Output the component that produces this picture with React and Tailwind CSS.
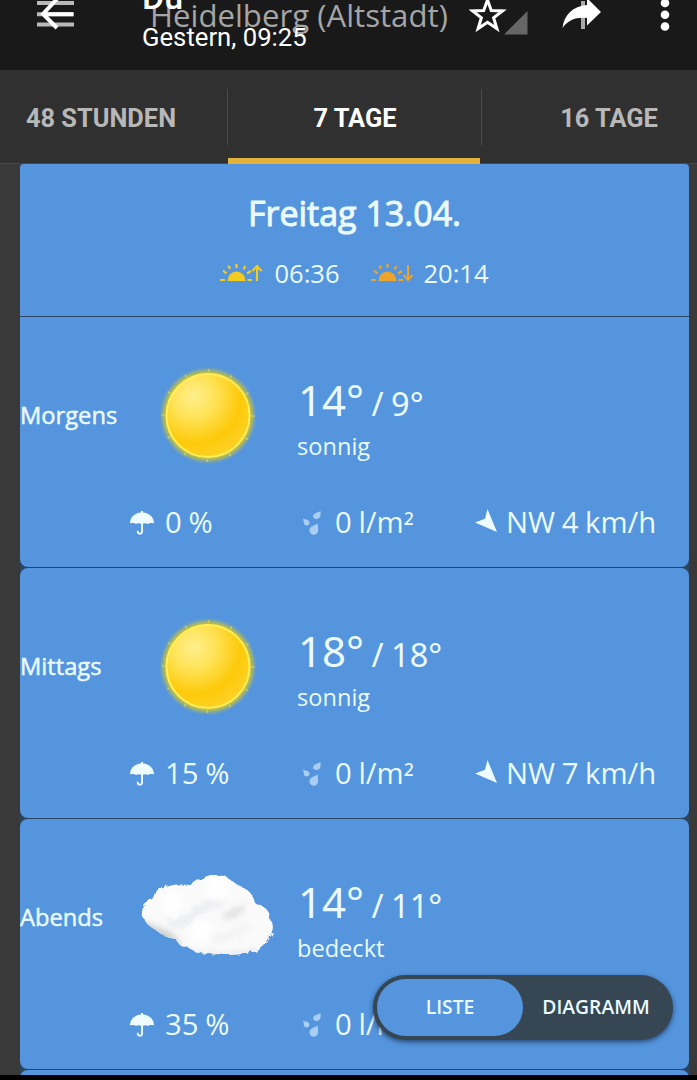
import { useState } from 'react'

const TABS = ['48 STUNDEN', '7 TAGE', '16 TAGE']

const PERIODS = [
  { label: 'Morgens', icon: 'sun', high: 14, low: 9, text: 'sonnig', rain: 0, amount: 0, wind: 'NW 4 km/h' },
  { label: 'Mittags', icon: 'sun', high: 18, low: 18, text: 'sonnig', rain: 15, amount: 0, wind: 'NW 7 km/h' },
  { label: 'Abends', icon: 'cloud', high: 14, low: 11, text: 'bedeckt', rain: 35, amount: 0 },
]

function SunIcon() {
  return (
    <svg width="140" height="110" viewBox="0 0 140 110">
      <defs>
        <radialGradient id="sunFill" cx="0.33" cy="0.27" r="0.75">
          <stop offset="0" stopColor="#fff08c" />
          <stop offset="0.35" stopColor="#ffe256" />
          <stop offset="0.75" stopColor="#fdca0a" />
          <stop offset="1" stopColor="#fdd024" />
        </radialGradient>
        <radialGradient id="sunGlow">
          <stop offset="0.84" stopColor="#dccb1c" />
          <stop offset="0.9" stopColor="#c6c040" stopOpacity="0.75" />
          <stop offset="1" stopColor="#8fb090" stopOpacity="0" />
        </radialGradient>
      </defs>
      <circle cx="70" cy="54.500" r="49" fill="url(#sunGlow)" />
      <circle cx="70" cy="54.500" r="45" fill="none" stroke="#f0e050" strokeWidth="3" strokeDasharray="1.5 22" opacity="0.6" />
      <circle cx="70" cy="54.500" r="41.500" fill="url(#sunFill)" stroke="#fff05a" strokeWidth="2" />
    </svg>
  )
}

function CloudIcon() {
  return (
    <svg width="140" height="110" viewBox="0 0 140 110" className="-mt-[5px]">
      <defs>
        <filter id="cloudEdge" x="-10%" y="-10%" width="120%" height="120%">
          <feTurbulence type="fractalNoise" baseFrequency="0.13" numOctaves="3" seed="4" />
          <feDisplacementMap in="SourceGraphic" scale="6" />
        </filter>
        <filter id="cloudSoft" x="-40%" y="-40%" width="180%" height="180%">
          <feGaussianBlur stdDeviation="3" />
        </filter>
        <clipPath id="cloudClip">
          <path d="M4 50C6 43 11 40 15 37C16 30 23 27 29 26C37 22 46 24 54 24C61 17 72 13 81 14C91 15 96 22 102 25C111 28 116 36 117 42C126 44 133 51 132 58C136 63 136 70 131 75C128 83 121 89 112 91C101 94 89 95 79 93C66 94 55 91 49 86C43 86 39 82 38 78C30 77 22 74 18 69C8 64 4 57 4 50Z" />
        </clipPath>
      </defs>
      <g filter="url(#cloudEdge)">
        <g clipPath="url(#cloudClip)">
          <rect width="140" height="110" fill="#fafafa" />
          <g filter="url(#cloudSoft)">
            <path d="M2 60C18 64 30 68 42 80L40 90L0 76Z" fill="#ced1d2" />
            <path d="M30 62C42 66 50 58 60 50C68 44 76 40 86 42" fill="none" stroke="#e8ebf1" strokeWidth="7" />
            <path d="M86 56C94 54 100 50 106 46" fill="none" stroke="#dcdcdd" strokeWidth="6" />
            <path d="M72 76C84 79 100 74 110 64" fill="none" stroke="#efeff1" strokeWidth="5" />
            <path d="M46 90C66 97 98 96 118 89" fill="none" stroke="#dde1e6" strokeWidth="4" />
            <circle cx="80" cy="28" r="12" fill="#fff" />
            <circle cx="64" cy="70" r="11" fill="#fff" />
            <circle cx="34" cy="42" r="11" fill="#fff" />
          </g>
        </g>
      </g>
    </svg>
  )
}

function SunTimeIcon({ down }) {
  return (
    <svg width="44" height="18" viewBox="0 0 44 18" fill="none" stroke="currentColor" strokeWidth="2.1">
      <path d="M7.500 17a9 9.500 0 0 1 18 0z" fill="currentColor" stroke="none" />
      <path d="M0 16h5M27.500 16h4.500M3 6.500l3.500 3M8.500 1.500l1.500 3.500M16.500 0v4M25.500 2l-2 3.500M31 7l-4 2.500" />
      {down ? <path d="M37 1v14.500M32.500 11l4.500 5l4.500-5" /> : <path d="M37 17V2M32.500 7l4.500-5l4.500 5" />}
    </svg>
  )
}

function UmbrellaIcon() {
  return (
    <svg width="24" height="24" viewBox="0 0 24 24" className="text-[#eefcff]">
      <path d="M0 12.500C0 6 5 2 11 1.500V0h2v1.500C19 2 24 6 24 12.500C22.500 11.800 19.500 11.800 18 13C16.500 12 14 12 13 12.800V20.500a3.100 3.100 0 0 1-6.200 0v-.8h1.900v.8a1.200 1.200 0 0 0 2.400 0V12.800C10 12 7.500 12 6 13C4.500 11.800 1.500 11.800 0 12.500Z" fill="currentColor" />
    </svg>
  )
}

function DropsIcon() {
  return (
    <svg width="18" height="24" viewBox="0 0 18 24" fill="#a9cdf3">
      <path d="M17.500 0C18 4 17.500 8 13.500 8C9.500 8 9 4 12 2.500C14 1.500 16 1 17.500 0Z" />
      <path d="M0 7.500C2 8.500 6.500 8.500 6.500 11.500C6.500 15.500 1 15 .8 12C.7 10 .5 9 0 7.500Z" />
      <path d="M15 12.500C14.500 15 15.500 17 15 20C14 25.500 6 24.500 6.500 19C6.800 15 11 15 15 12.500Z" />
    </svg>
  )
}

function WindIcon() {
  return (
    <svg width="22" height="24" viewBox="0 0 22 24" fill="#eefcff" className="-mt-[5px]">
      <path d="M12.500 0L22 23L0 13.500L10 9.800Z" />
    </svg>
  )
}

function Header() {
  return (
    <header className="relative h-[70px] shrink-0 overflow-hidden bg-[#191919]">
      <div className="flex items-start">
        <svg width="38" height="28" viewBox="0 0 38 28" className="ml-9 shrink-0" stroke="#b9b9b9" strokeWidth="4">
          <path d="M1 3H38M1 14.300H38M1 24.500H38" />
        </svg>
        <h1 className="ml-[76px] -mt-[5px] w-[301px] shrink-0 whitespace-nowrap text-[31.2px] leading-[41px] text-[#a5a5a5]">
          Heidelberg (Altstadt)
        </h1>
        <svg width="64" height="36" viewBox="0 0 64 36" className="ml-[18px] shrink-0">
          <path d="M58.500 11V34.500H35Z" fill="#666" />
          <path d="M18.500 0L22.300 10.600L33.500 10.900L24.600 17.700L27.900 28.600L18.500 22.200L9.100 28.600L12.400 17.700L3.500 10.900L14.700 10.600Z" fill="#191919" stroke="#fff" strokeWidth="3" />
        </svg>
        <svg width="40" height="30" viewBox="0 0 40 30" className="ml-[29px] shrink-0">
          <path d="M19 1h4v28h-4z" fill="#aaa" />
          <path d="M25 -2L39 12L25 25.500V18C14 17 6 20 .5 28C2 15 11 6 25 5Z" fill="#fff" />
        </svg>
        <svg width="10" height="32" viewBox="0 0 10 32" className="ml-[58px] shrink-0" fill="#fff">
          <circle cx="5" cy="3" r="4.300" />
          <circle cx="5" cy="14.700" r="4.300" />
          <circle cx="5" cy="26.500" r="4.300" />
        </svg>
      </div>
      <svg width="34" height="30" viewBox="0 0 34 30" className="absolute left-10 top-0" fill="none" stroke="#fff" strokeWidth="4">
        <path d="M17 -1L3 14L17 28M3 14.300H33" />
      </svg>
      <div className="absolute left-[142px] -top-[20px] font-['Roboto'] text-white">
        <div className="text-[34px] leading-[34px] font-medium">Du</div>
        <div className="mt-[8px] text-[25.7px] leading-[30px]">Gestern, 09:25</div>
      </div>
    </header>
  )
}

function PeriodCard({ period, first }) {
  return (
    <section className={`h-[250px] shrink-0 bg-[#5495dd] ${first ? 'rounded-b-lg' : 'rounded-lg'}`}>
      <div className="flex h-[198px] items-center">
        <div className="w-[118px] text-[23.7px] [-webkit-text-stroke:0.5px]">{period.label}</div>
        <div className="w-[140px]">{period.icon === 'sun' ? <SunIcon /> : <CloudIcon />}</div>
        <div className="ml-[20px] pt-[5px]">
          <div className="whitespace-nowrap font-['Noto_Sans',sans-serif] leading-[50px]">
            <span className="text-[42px]">{period.high}°</span>
            <span className="text-[32.5px] [word-spacing:-1px]"> / {period.low}°</span>
          </div>
          <div className="-ml-px -mt-[6px] text-[23.6px] leading-[34px]">{period.text}</div>
        </div>
      </div>
      <div className="-mt-[5px] flex h-[26px] items-center pl-[110px] text-[29.3px] whitespace-nowrap [word-spacing:-1px]">
        <div className="flex w-[173px] items-center gap-[11px]">
          <UmbrellaIcon />
          <span>{period.rain} %</span>
        </div>
        <div className="flex w-[172px] items-center gap-[14px]">
          <DropsIcon />
          <span>
            {period.amount} l/m<span className="relative top-[4px]">²</span>
          </span>
        </div>
        {period.wind && (
          <div className="flex items-center gap-[9px]">
            <WindIcon />
            <span>{period.wind}</span>
          </div>
        )}
      </div>
    </section>
  )
}

export default function App() {
  const [tab, setTab] = useState(1)
  const [view, setView] = useState('liste')

  return (
    <div className="relative flex h-[1080px] w-[697px] flex-col overflow-hidden bg-[#393939] font-['Open_Sans',sans-serif] text-[#eafaff]">
      <Header />
      <nav className="flex h-[94px] shrink-0 border-b border-[#484848] bg-[#303030] font-['Roboto'] text-[25.4px] font-bold">
        {TABS.map((name, i) => (
          <button
            key={name}
            onClick={() => setTab(i)}
            className={`relative flex shrink-0 items-center justify-center whitespace-nowrap pt-[3px] ${i === 0 ? 'w-[228px] pr-[26px]' : 'w-[254px]'} ${tab === i ? 'text-white' : 'text-[#b8b8b8]'}`}
          >
            {name}
            {i < 2 && <span className="absolute right-0 top-[19px] h-[56px] w-px bg-[#4a4a4a]" />}
            {tab === i && <span className="absolute left-0 bottom-[-1px] h-[6px] w-[252px] bg-[#e3b23c]" />}
          </button>
        ))}
      </nav>

      <main className="mr-2 ml-5 flex h-[911px] shrink-0 flex-col gap-px overflow-hidden rounded-t-sm bg-[#2b4560]">
        <section className="flex h-[152px] shrink-0 flex-col items-center bg-[#5495dd]">
          <h2 className="mt-[25px] text-[34px] leading-[48px] [-webkit-text-stroke:1px]">Freitag 13.04.</h2>
          <div className="mt-[18px] flex items-center text-[25.5px] leading-[36px]">
            <span className="text-[#f3cc22]"><SunTimeIcon /></span>
            <span className="ml-[10px]">06:36</span>
            <span className="ml-[31px] text-[#eba52c]"><SunTimeIcon down /></span>
            <span className="ml-[9px]">20:14</span>
          </div>
        </section>
        {PERIODS.map((period, i) => (
          <PeriodCard key={period.label} period={period} first={i === 0} />
        ))}
        <section className="h-[20px] shrink-0 rounded-t-lg bg-[#5495dd]" />
      </main>
      <div className="h-[5px] shrink-0 bg-black" />

      <div className="absolute left-[373px] top-[975px] flex h-[65px] w-[300px] rounded-full bg-[#364653] p-1 text-[19.3px] font-semibold shadow-[0_2px_5px_rgba(20,40,70,0.7)]">
        <button onClick={() => setView('liste')} className={`w-[146px] rounded-full ${view === 'liste' ? 'bg-[#5495dd]' : ''}`}>
          LISTE
        </button>
        <button onClick={() => setView('diagramm')} className={`w-[146px] rounded-full ${view === 'diagramm' ? 'bg-[#5495dd]' : ''}`}>
          DIAGRAMM
        </button>
      </div>
    </div>
  )
}
